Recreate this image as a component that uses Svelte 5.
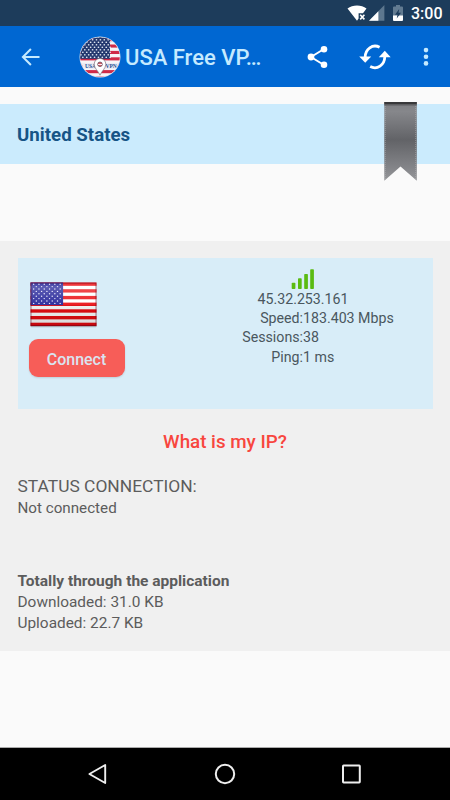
<script>
  const server = {
    country: 'United States',
    ip: '45.32.253.161',
    details: [
      { label: 'Speed:', value: '183.403 Mbps' },
      { label: 'Sessions:', value: '38' },
      { label: 'Ping:', value: '1 ms' }
    ]
  };

  const traffic = { downloaded: '31.0 KB', uploaded: '22.7 KB' };

  const stripes = [0, 1, 2, 3, 4, 5, 6];

  // star grid of the flag canton
  function makeStars(rows, cols, dx, dy) {
    const stars = [];
    for (let r = 0; r < rows; r++) {
      for (let c = 0; c < cols - (r % 2); c++) {
        stars.push({ x: (c + 0.5 + (r % 2) * 0.5) * dx, y: (r + 0.5) * dy });
      }
    }
    return stars;
  }

  const flagStars = makeStars(9, 6, 5.3, 2.4);
  const logoStars = makeStars(9, 9, 3.9, 2.5);
</script>

<div class="screen">
  <div class="status-bar">
    <svg class="wifi" width="20" height="17" viewBox="0 0 20 17">
      <path d="M0.5 3.6C5.5-0.4 14.5-0.4 19.5 3.6L16 8.2H11.6V13.6L10 15.8Z" fill="#fff" />
      <path d="M13.2 9.8l4.2 4.6M17.4 9.8l-4.2 4.6" stroke="#fff" stroke-width="1.6" />
    </svg>
    <svg class="cell" width="16" height="16" viewBox="0 0 16 16">
      <path d="M15.4 0V15.8H0Z" fill="#5d778e" />
      <path d="M9.4 6.2V15.8H0Z" fill="#fff" />
    </svg>
    <svg class="battery" width="10" height="16" viewBox="0 0 10 16">
      <path d="M0 2.6Q0 1.6 1 1.6H3V0H7V1.6H9Q10 1.6 10 2.6V11H0Z" fill="#627b91" />
      <path d="M0 10.6H10V15Q10 16 9 16H1Q0 16 0 15Z" fill="#fff" />
      <path d="M6.2 4L2 9.7H4.5L3.7 13.4L8 7.8H5.5Z" fill="#1d3c5b" />
    </svg>
    <span class="clock">3:00</span>
  </div>

  <header class="app-bar">
    <svg class="back" width="20" height="18" viewBox="0 0 20 18">
      <path d="M18.5 9H2.2M9.9 1L1.9 9L9.9 17" fill="none" stroke="#c5eaff" stroke-width="2" />
    </svg>

    <svg class="logo" width="42" height="42" viewBox="0 0 42 42">
      <defs>
        <clipPath id="logo-clip"><circle cx="21" cy="21" r="19.8" /></clipPath>
      </defs>
      <circle cx="21" cy="21" r="20.5" fill="#d9e5f2" />
      <g clip-path="url(#logo-clip)">
        <rect width="42" height="42" fill="#f7f4f7" />
        {#each stripes as i}
          <rect x="0" y={2.1 + i * 6.4} width="42" height="3.1" fill="#d02a48" />
        {/each}
        <rect width="31" height="22.8" fill="#24396f" />
        {#each logoStars as star}
          <circle cx={star.x - 2} cy={star.y} r="0.85" fill="#dce4ef" />
        {/each}
        <rect x="2" y="27" width="38" height="5.8" fill="#ecebf4" />
        <text x="6" y="32" class="logo-text">USA</text>
        <text x="26.5" y="32" class="logo-text">VPN</text>
      </g>
      <path d="M21 39.2C19.5 35 15.2 32.7 15.2 28.2A5.8 5.8 0 0 1 26.8 28.2C26.8 32.7 22.5 35 21 39.2Z" fill="#fff" stroke="#7c7680" stroke-width="0.7" />
      <circle cx="21" cy="28.3" r="2.3" fill="#dc5b67" stroke="#514a59" stroke-width="0.7" />
      <path d="M18.9 28.5H23.1" stroke="#fff" stroke-width="0.9" />
    </svg>

    <h1>USA Free VP…</h1>

    <svg class="share" width="22" height="24" viewBox="0 0 22 24">
      <path d="M17 4L4 12L17 20" fill="none" stroke="#fff" stroke-width="1.9" />
      <circle cx="17" cy="4.2" r="3.3" fill="#fff" />
      <circle cx="4" cy="12" r="3.4" fill="#fff" />
      <circle cx="17" cy="19.8" r="3.3" fill="#fff" />
    </svg>

    <svg class="refresh" width="32" height="26" viewBox="0 0 32 26">
      <g fill="none" stroke="#fff" stroke-width="2.8">
        <path d="M20.6 3.2C13.5-0.3 6.3 5 6.2 13" />
        <path d="M11.2 22.6C18.3 26.3 25.4 21 25.8 13" />
      </g>
      <path d="M0.2 12.4H12.2L6.2 18.8Z" fill="#fff" />
      <path d="M19.8 13.2H31.7L25.8 6.8Z" fill="#fff" />
    </svg>

    <svg class="more" width="6" height="20" viewBox="0 0 6 20">
      <circle cx="3" cy="3.1" r="2.3" fill="#c5eaff" />
      <circle cx="3" cy="9.8" r="2.3" fill="#c5eaff" />
      <circle cx="3" cy="16.4" r="2.3" fill="#c5eaff" />
    </svg>
  </header>

  <section class="country">
    <h2>{server.country}</h2>
    <svg class="ribbon" width="33" height="80" viewBox="0 0 33 80">
      <defs>
        <linearGradient id="ribbon-fill" x1="0" y1="0" x2="0" y2="1">
          <stop offset="0" stop-color="#7c7d81" />
          <stop offset="0.12" stop-color="#86878b" />
          <stop offset="0.48" stop-color="#626367" />
          <stop offset="0.85" stop-color="#85868a" />
          <stop offset="1" stop-color="#97989b" />
        </linearGradient>
      </defs>
      <path d="M0.3 0H32.8V78.8L16.5 64.4L0.3 78.8Z" fill="url(#ribbon-fill)" />
      <path d="M0.3 0H32.8V2H0.3Z" fill="#38383a" />
      <path d="M0.3 2H32.8V3.6H0.3Z" fill="#5c5d60" />
      <path d="M1.3 4V77M31.7 4V77" stroke="#b1b2b5" stroke-width="0.6" stroke-dasharray="1 1" />
    </svg>
  </section>

  <main class="panel">
    <div class="card">
      <div class="left">
        <svg class="flag" width="68" height="47" viewBox="0 0 68 47">
          <defs>
            <linearGradient id="flag-shade" x1="0" y1="0" x2="0" y2="1">
              <stop offset="0" stop-color="#fff" stop-opacity="0.1" />
              <stop offset="0.1" stop-color="#fff" stop-opacity="0.28" />
              <stop offset="0.52" stop-color="#fff" stop-opacity="0.08" />
              <stop offset="0.53" stop-color="#000" stop-opacity="0.06" />
              <stop offset="1" stop-color="#000" stop-opacity="0.16" />
            </linearGradient>
          </defs>
          <rect x="0.6" y="1.2" width="66" height="44" rx="1" fill="#000" opacity="0.22" />
          <rect x="0.5" y="0.5" width="66" height="43.6" fill="#fff" />
          {#each stripes as i}
            <rect x="0.5" y={0.5 + i * 6.7} width="66" height="3.36" fill="#ea0b10" />
          {/each}
          <rect x="0.5" y="0.5" width="32.6" height="22.6" fill="#1f1f96" />
          {#each flagStars as star}
            <circle cx={star.x + 1} cy={star.y + 1} r="0.72" fill="#e5e5fb" />
          {/each}
          <rect x="0.5" y="0.5" width="66" height="43.6" fill="url(#flag-shade)" />
          <rect x="1" y="1" width="65" height="42.6" fill="none" stroke="#600018" stroke-opacity="0.5" />
        </svg>
        <button>Connect</button>
      </div>

      <div class="info">
        <svg class="signal" width="24" height="21" viewBox="0 0 24 21">
          <g fill="#5abb12">
            <rect x="0.7" y="13.8" width="3.7" height="6.2" rx="0.8" />
            <rect x="7" y="9.3" width="3.7" height="10.7" rx="0.8" />
            <rect x="13.2" y="5" width="3.7" height="15" rx="0.8" />
            <rect x="19.2" y="0.3" width="3.7" height="19.7" rx="0.8" />
          </g>
        </svg>
        <div class="ip">{server.ip}</div>
        {#each server.details as row}
          <div class="row">
            <span class="label">{row.label}</span>
            <span>{row.value}</span>
          </div>
        {/each}
      </div>
    </div>

    <a class="my-ip" href="#ip">What is my IP?</a>

    <div class="status">
      <h3>STATUS CONNECTION:</h3>
      <p class="state">Not connected</p>
    </div>

    <div class="totals">
      <h4>Totally through the application</h4>
      <p>Downloaded: {traffic.downloaded}</p>
      <p>Uploaded: {traffic.uploaded}</p>
    </div>
  </main>

  <nav class="nav-bar">
    <svg width="22" height="22" viewBox="0 0 22 22">
      <path d="M18.2 2V20L2.4 11Z" fill="none" stroke="#eee" stroke-width="1.9" stroke-linejoin="round" />
    </svg>
    <svg width="22" height="22" viewBox="0 0 22 22">
      <circle cx="11" cy="11" r="9.2" fill="none" stroke="#eee" stroke-width="2" />
    </svg>
    <svg width="22" height="22" viewBox="0 0 22 22">
      <rect x="3" y="2.6" width="16.8" height="16.8" rx="0.6" fill="none" stroke="#eee" stroke-width="2" />
    </svg>
  </nav>
</div>

<style>
  :global(body) {
    margin: 0;
    background: #fafafa;
  }

  .screen {
    display: flex;
    flex-direction: column;
    width: 450px;
    height: 800px;
    overflow: hidden;
    background: #fafafa;
    color: #5c5c5c;
    font-family: Roboto, 'Liberation Sans', sans-serif;
  }

  svg {
    display: block;
    flex: none;
  }

  h1,
  h2,
  h3,
  h4,
  p {
    margin: 0;
    font-weight: 400;
    white-space: nowrap;
  }

  .status-bar {
    display: flex;
    align-items: center;
    height: 26px;
    padding-left: 347px;
    background: #1d3c5b;
  }

  .wifi {
    margin-top: 1px;
  }

  .cell {
    margin-left: 2px;
  }

  .battery {
    margin-left: 8px;
  }

  .clock {
    margin: 2px 0 0 8px;
    color: #fff;
    font-size: 16px;
    font-weight: 500;
    line-height: 20px;
  }

  .app-bar {
    display: flex;
    align-items: center;
    box-sizing: border-box;
    height: 61px;
    padding-left: 21px;
    background: #0067d2;
  }

  .logo {
    margin-left: 38px;
  }

  .logo-text {
    fill: #234f92;
    font-size: 5.5px;
    font-weight: 900;
    font-family: 'Liberation Serif', serif;
  }

  h1 {
    width: 182px;
    margin: 3px 0 0 4px;
    color: #c5eaff;
    font-size: 22px;
    font-weight: 500;
    line-height: 28px;
  }

  .refresh {
    margin-left: 30px;
  }

  .more {
    margin-left: 32px;
  }

  .country {
    position: relative;
    display: flex;
    align-items: center;
    height: 60px;
    margin-top: 17px;
    padding-left: 17px;
    background: #cbebfd;
  }

  h2 {
    margin-top: 2px;
    color: #165486;
    font-size: 18.7px;
    font-weight: 700;
    line-height: 24px;
  }

  .ribbon {
    position: absolute;
    top: -2px;
    left: 384px;
  }

  .panel {
    display: flex;
    flex-direction: column;
    box-sizing: border-box;
    height: 410px;
    margin-top: 77px;
    padding: 17px 17.5px 0;
    background: #f0f0f0;
  }

  .card {
    display: flex;
    justify-content: space-between;
    height: 151px;
    background: #d8edf8;
  }

  .left {
    padding: 24px 0 0 11px;
  }

  .flag {
    margin-left: 1.5px;
  }

  button {
    display: block;
    width: 96px;
    height: 38px;
    margin-top: 10px;
    padding: 2px 0 0;
    border: 0;
    border-radius: 9px;
    background: #f75d58;
    color: #d9e4f0;
    font-family: inherit;
    font-size: 16px;
    font-weight: 500;
    box-shadow: 0 1px 2px rgba(0, 0, 0, 0.12);
  }

  .info {
    width: 259px;
    padding-top: 11px;
    color: #4a575e;
    font-size: 14.2px;
    line-height: 19.2px;
  }

  .signal {
    margin: 0 auto;
  }

  .ip {
    text-align: center;
  }

  .row {
    display: grid;
    grid-template-columns: 1fr 1fr;
    white-space: nowrap;
  }

  .label {
    text-align: right;
  }

  .my-ip {
    align-self: center;
    margin-top: 21px;
    color: #f8463e;
    font-size: 18.8px;
    font-weight: 500;
    line-height: 24px;
    text-decoration: none;
  }

  .status {
    margin-top: 20px;
  }

  h3 {
    font-size: 17.4px;
    line-height: 24px;
  }

  p {
    font-size: 15.4px;
    line-height: 21px;
  }

  .state {
    font-size: 15.2px;
  }

  .totals {
    margin-top: 51px;
  }

  h4 {
    font-size: 15.5px;
    font-weight: 700;
    line-height: 22px;
  }

  .nav-bar {
    display: flex;
    align-items: center;
    justify-content: space-between;
    box-sizing: border-box;
    height: 53px;
    margin-top: auto;
    padding: 0 88px 0 87px;
    border-top: 1px solid #aaa;
    background: #000;
  }
</style>
